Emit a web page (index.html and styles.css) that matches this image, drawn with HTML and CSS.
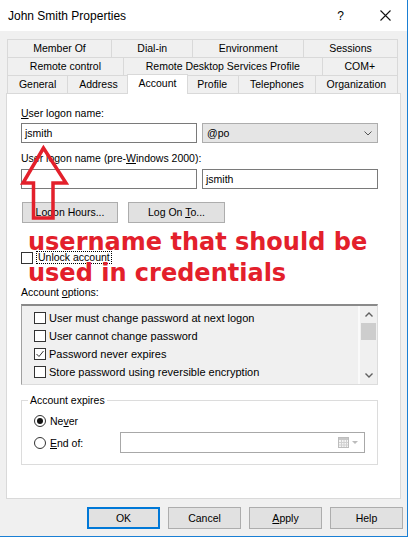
FILE: index.html
```html
<!DOCTYPE html>
<html>
<head>
<meta charset="utf-8">
<link rel="stylesheet" href="styles.css">
</head>
<body>
<div class="window">
  <div class="titlebar">
    <span class="title">John Smith Properties</span>
    <span class="help">?</span>
    <svg class="close" width="11" height="11" viewBox="0 0 11 11"><path d="M0.5 0.5 L10.5 10.5 M10.5 0.5 L0.5 10.5" stroke="#111" stroke-width="1.1" fill="none"/></svg>
  </div>
  <div class="content">
    <div class="tabs">
      <div class="tabrow">
        <div class="tab">Member Of</div>
        <div class="tab">Dial-in</div>
        <div class="tab">Environment</div>
        <div class="tab">Sessions</div>
      </div>
      <div class="tabrow">
        <div class="tab">Remote control</div>
        <div class="tab">Remote Desktop Services Profile</div>
        <div class="tab">COM+</div>
      </div>
      <div class="tabrow">
        <div class="tab">General</div>
        <div class="tab">Address</div>
        <div class="tab active">Account</div>
        <div class="tab">Profile</div>
        <div class="tab">Telephones</div>
        <div class="tab">Organization</div>
      </div>
    </div>
    <div class="panel">
      <div class="label"><u>U</u>ser logon name:</div>
      <div class="row r1">
        <div class="field">jsmith</div>
        <div class="field select"><span>@po</span>
          <svg width="8" height="5" viewBox="0 0 8 5"><polyline points="0.5,0.5 4,4 7.5,0.5" stroke="#555" fill="none"/></svg>
        </div>
      </div>
      <div class="label l2">User logon name (pre-<u>W</u>indows 2000):</div>
      <div class="row r2">
        <div class="field"></div>
        <div class="field">jsmith</div>
      </div>
      <div class="btnrow">
        <div class="btn">Logon Hours...</div>
        <div class="btn wide">Log On <u>T</u>o...</div>
      </div>
      <div class="unlock">
        <span class="cb"></span>
        <span class="focus">Unlock account</span>
      </div>
      <div class="label l3">Account <u>o</u>ptions:</div>
      <div class="listbox">
        <div class="items">
          <div class="item"><span class="cb"></span>User must change password at next logon</div>
          <div class="item"><span class="cb"></span>User cannot change password</div>
          <div class="item"><span class="cb"><svg width="10" height="10" viewBox="0 0 10 10"><polyline points="1.5,5 4,7.5 8.5,2" stroke="#333" stroke-width="1" fill="none"/></svg></span>Password never expires</div>
          <div class="item"><span class="cb"></span>Store password using reversible encryption</div>
        </div>
        <div class="scrollbar">
          <div class="sbtn"><svg width="8" height="5" viewBox="0 0 8 5"><polyline points="0.5,4.5 4,1 7.5,4.5" stroke="#606060" stroke-width="1.4" fill="none"/></svg></div>
          <div class="thumb"></div>
          <div class="track"></div>
          <div class="sbtn"><svg width="8" height="5" viewBox="0 0 8 5"><polyline points="0.5,0.5 4,4 7.5,0.5" stroke="#606060" stroke-width="1.4" fill="none"/></svg></div>
        </div>
      </div>
      <fieldset class="expires">
        <legend>Account expires</legend>
        <div class="opt o1"><span class="radio on"></span>Ne<u>v</u>er</div>
        <div class="opt o2"><span class="radio"></span><span class="endlabel"><u>E</u>nd of:</span>
          <div class="date">
            <svg width="22" height="11" viewBox="0 0 22 11">
              <rect x="0.5" y="0.5" width="10" height="10" fill="#f4f4f4" stroke="#bdbdbd"/>
              <rect x="1" y="1" width="9" height="2" fill="#c8c8c8"/>
              <path d="M3.5 3 V10 M6 3 V10 M8.5 3 V10 M1 5.5 H10 M1 8 H10" stroke="#d0d0d0" stroke-width="1"/>
              <polygon points="14,4 20,4 17,7" fill="#bcbcbc"/>
            </svg>
          </div>
        </div>
      </fieldset>
    </div>
    <div class="dlgbtns">
      <div class="dbtn default">OK</div>
      <div class="dbtn">Cancel</div>
      <div class="dbtn"><u>A</u>pply</div>
      <div class="dbtn">Help</div>
    </div>
  </div>
  <svg class="arrow" width="80" height="230" viewBox="0 0 80 230">
    <polygon points="43.5,148 23,183 33.5,183 33.5,218 53,218 53,183 66,183" fill="none" stroke="#e3202b" stroke-width="3.5" stroke-linejoin="miter"/>
  </svg>
  <div class="note">username that should be<br>used in credentials</div>
</div>
</body>
</html>
```

FILE: styles.css
```css
html, body {
  margin: 0;
  padding: 0;
  background: #fff;
}
body {
  font-family: "Liberation Sans", Arial, sans-serif;
  font-size: 10.5px;
  color: #000;
}
u { text-decoration: underline; text-underline-offset: 1px; }

.window {
  position: relative;
  width: 407px;
  height: 536px;
  background: #f0f0f0;
  border-right: 1px solid #1a7fd4;
  border-bottom: 1px solid #1a7fd4;
  overflow: hidden;
}

.titlebar {
  height: 31px;
  background: #fff;
  display: flex;
  align-items: center;
  padding-left: 8px;
  font-size: 12px;
}
.help { margin-left: auto; font-size: 12px; }
.close { margin-left: 36px; margin-right: 16px; }

.content { padding: 8px 0 0 6px; }

.tabs { margin-left: 1px; width: 391px; }
.tabrow { display: flex; height: 18px; }
.tab {
  flex: 1 1 auto;
  box-sizing: border-box;
  height: 18px;
  border: 1px solid #d9d9d9;
  border-bottom: 0;
  margin-left: -1px;
  text-align: center;
  line-height: 17px;
  white-space: nowrap;
  background: #f0f0f0;
}
.tab:first-child { margin-left: 0; }
.tab.active {
  position: relative;
  z-index: 1;
  background: #fff;
  height: 20px;
  margin: -1px -2px -1px -3px;
  line-height: 16px;
}

.panel {
  width: 395px;
  height: 406px;
  box-sizing: border-box;
  border: 1px solid #d9d9d9;
  background: #fff;
  padding: 13px 0 0 14px;
}
.label { line-height: 13px; height: 13px; white-space: nowrap; }
.l2 { margin-top: 9px; }
.l3 { margin-top: 22px; }

.row { display: flex; gap: 5px; }
.r1 { margin-top: 3px; }
.r2 { margin-top: 4px; }
.field {
  width: 176px;
  height: 20px;
  box-sizing: border-box;
  border: 1px solid #7a7a7a;
  background: #fff;
  padding-left: 3px;
  line-height: 18px;
}
.select {
  background: #e5e5e5;
  border-color: #adadad;
  display: flex;
  align-items: center;
  justify-content: space-between;
  padding: 0 5px 0 4px;
}

.btnrow { display: flex; gap: 10px; margin: 13px 0 0 1px; }
.btn {
  width: 96px;
  height: 21px;
  box-sizing: border-box;
  border: 1px solid #adadad;
  background: #e1e1e1;
  text-align: center;
  line-height: 19px;
}
.btn.wide { width: 97px; }

.unlock {
  display: flex;
  align-items: center;
  height: 13px;
  margin-top: 28px;
}
.cb {
  width: 12px;
  height: 12px;
  box-sizing: border-box;
  border: 1px solid #333;
  background: #fff;
  display: inline-flex;
  align-items: center;
  justify-content: center;
  flex: none;
}
.focus {
  margin-left: 3px;
  padding: 0 1px;
  line-height: 11px;
  border: 1px dotted #000;
}

.listbox {
  margin-top: 5px;
  width: 357px;
  height: 81px;
  box-sizing: border-box;
  border-top: 2px solid #8a8a8a;
  border-left: 1px solid #a0a0a0;
  border-right: 1px solid #dcdcdc;
  border-bottom: 1px solid #dcdcdc;
  background: #f0f0f0;
  display: flex;
}
.items { flex: 1; padding: 3px 0 0 12px; font-size: 11px; }
.item {
  display: flex;
  align-items: center;
  height: 18px;
  white-space: nowrap;
}
.item .cb { margin-right: 3px; }
.scrollbar {
  width: 17px;
  border-left: 2px solid #fafafa;
  display: flex;
  flex-direction: column;
}
.sbtn {
  height: 17px;
  display: flex;
  align-items: center;
  justify-content: center;
}
.thumb { height: 17px; background: #cdcdcd; margin: 0 1px; }
.track { flex: 1; }

.expires {
  margin: 9px 0 0;
  width: 357px;
  height: 71px;
  box-sizing: border-box;
  border: 1px solid #dcdcdc;
  padding: 0 0 0 12px;
}
.expires legend {
  padding: 0 2px;
  margin-left: -6px;
  line-height: 13px;
}
.opt { display: flex; align-items: center; }
.o1 { height: 14px; margin-top: 7px; }
.o2 { height: 21px; margin-top: 4px; }
.radio {
  width: 12px;
  height: 12px;
  box-sizing: border-box;
  border: 1px solid #333;
  border-radius: 50%;
  background: #fff;
  margin-right: 4px;
  display: inline-flex;
  align-items: center;
  justify-content: center;
  flex: none;
}
.radio.on::after {
  content: "";
  width: 6px;
  height: 6px;
  border-radius: 50%;
  background: #111;
}
.endlabel { width: 70px; }
.date {
  width: 245px;
  height: 21px;
  box-sizing: border-box;
  border: 1px solid #a8a8a8;
  background: #fff;
  display: flex;
  align-items: center;
  justify-content: flex-end;
  padding-right: 4px;
}

.dlgbtns {
  display: flex;
  gap: 8px;
  margin: 8px 0 0 81px;
}
.dbtn {
  width: 73px;
  height: 22px;
  box-sizing: border-box;
  border: 1px solid #adadad;
  background: #e1e1e1;
  text-align: center;
  line-height: 20px;
}
.dbtn.default {
  border: 2px solid #0078d7;
  line-height: 18px;
}

.arrow {
  position: absolute;
  left: 0;
  top: 0;
  z-index: 5;
}
.note {
  position: absolute;
  left: 28px;
  top: 227px;
  z-index: 5;
  font-family: "DejaVu Sans", sans-serif;
  font-weight: bold;
  font-size: 24px;
  line-height: 31px;
  color: #e3202b;
  white-space: nowrap;
}
```
